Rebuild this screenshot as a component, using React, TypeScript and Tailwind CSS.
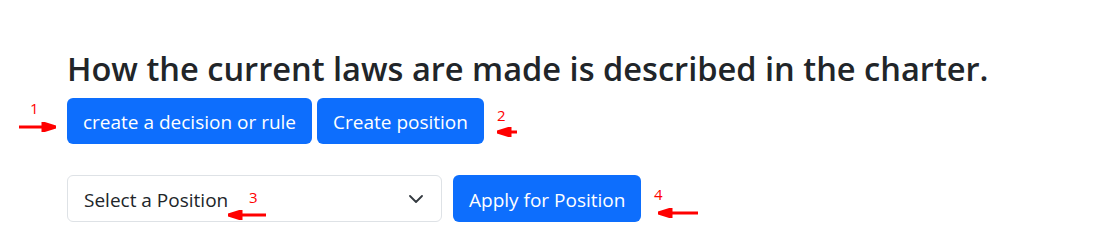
import React from "react"

type ArrowProps = {
  x1: number
  x2: number
  y: number
  dir: "left" | "right"
}

// red annotation arrow, drawn on top of the page
function Arrow({ x1, x2, y, dir }: ArrowProps) {
  const w = x2 - x1
  const head = 13
  const path =
    dir === "right"
      ? `M0 5 H${w - head} M${w - head} 1 L${w} 5 L${w - head} 9 Z`
      : `M${head} 1 L0 5 L${head} 9 Z M${head} 5 H${w}`
  return (
    <svg
      className="absolute"
      style={{ left: x1, top: y - 5 }}
      width={w}
      height={10}
      viewBox={`0 0 ${w} 10`}
    >
      <path d={path} stroke="#ff0000" strokeWidth={3} fill="#ff0000" />
    </svg>
  )
}

function Mark({ n, x, y }: { n: string; x: number; y: number }) {
  return (
    <span
      className="absolute text-[15px] leading-none text-[#ff0000]"
      style={{ left: x, top: y }}
    >
      {n}
    </span>
  )
}

export default function App() {
  return (
    <div className="relative h-[252px] w-full bg-white font-['Open_Sans',sans-serif] text-[#212529]">
      <div className="px-[67px] pt-[47px]">
        <h2 className="whitespace-nowrap text-[32.6px] font-semibold leading-[44px]">
          How the current laws are made is described in the charter.
        </h2>

        <div className="mt-[7px] flex gap-[5px]">
          <button className="h-[46px] rounded-md bg-[#0d6efd] px-4 pt-[2px] text-[19px] text-white">
            create a decision or rule
          </button>
          <button className="h-[46px] rounded-md bg-[#0d6efd] px-4 pt-[2px] text-[19px] text-white">
            Create position
          </button>
        </div>

        <div className="mt-[31px] flex gap-[11px]">
          <div className="flex h-[47px] w-[375px] items-center justify-between rounded-md border border-[#dee2e6] pl-4 pr-[18px] text-[19px]">
            <span className="pt-[3px]">Select a Position</span>
            <svg width="14" height="8" viewBox="0 0 14 8" fill="none">
              <path d="M1 1 L7 7 L13 1" stroke="#343a40" strokeWidth="1.8" strokeLinecap="round" strokeLinejoin="round" />
            </svg>
          </div>
          <button className="h-[47px] rounded-md bg-[#0d6efd] px-4 pt-[3px] text-[19px] text-white">
            Apply for Position
          </button>
        </div>
      </div>

      <Mark n="1" x={30} y={101} />
      <Arrow x1={19} x2={56} y={127} dir="right" />
      <Mark n="2" x={497} y={108} />
      <Arrow x1={497} x2={517} y={132} dir="left" />
      <Mark n="3" x={249} y={190} />
      <Arrow x1={228} x2={266} y={215} dir="left" />
      <Mark n="4" x={654} y={187} />
      <Arrow x1={658} x2={698} y={213} dir="left" />
    </div>
  )
}
